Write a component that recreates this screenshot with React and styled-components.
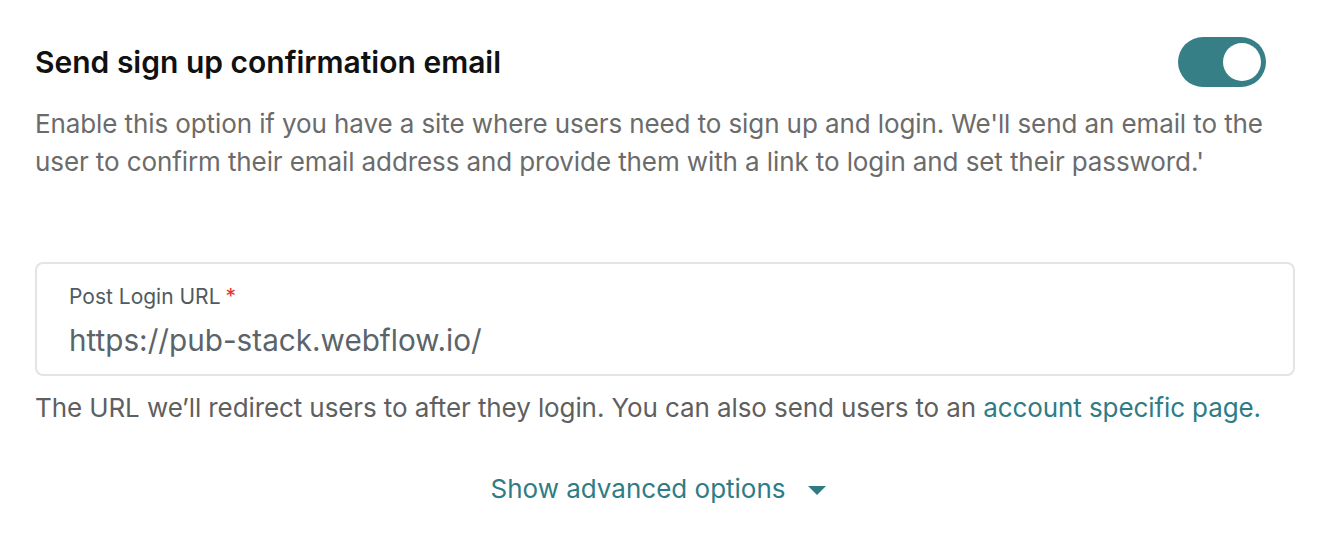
import React, { useState } from "react";
import styled, { createGlobalStyle } from "styled-components";

const GlobalStyle = createGlobalStyle`
    html, body {
        margin: 0;
        padding: 0;
        background: #ffffff;
    }
    body {
        font-family: "Inter", "Liberation Sans", sans-serif;
        -webkit-font-smoothing: antialiased;
    }
`;

const Container = styled.div`
    width: 1326px;
    box-sizing: border-box;
    padding: 37px 30px 0 35px;
    display: flex;
    flex-direction: column;
`;

const Header = styled.div`
    display: flex;
    align-items: center;
    justify-content: space-between;
    padding-right: 30px;
`;

const Title = styled.h2`
    margin: 0;
    font-size: 30px;
    font-weight: 600;
    color: #111;
    letter-spacing: 0;
`;

const Track = styled.button`
    width: 88px;
    height: 50px;
    border: none;
    border-radius: 25px;
    padding: 0 5px;
    display: flex;
    align-items: center;
    justify-content: ${props => (props.on ? "flex-end" : "flex-start")};
    background: ${props => (props.on ? "#367f87" : "#c9cfd2")};
    cursor: pointer;
    transition: all 0.15s ease;
`;

const Knob = styled.span`
    width: 38px;
    height: 38px;
    border-radius: 50%;
    background: #fff;
`;

const Description = styled.p`
    margin: 18px 0 0;
    font-size: 26px;
    line-height: 38px;
    color: #6b6b6b;
    letter-spacing: -0.1px;
`;

const Field = styled.label`
    margin-top: 81px;
    width: 1260px;
    box-sizing: border-box;
    border: 2px solid #e4e4e4;
    border-radius: 8px;
    padding: 20px 32px 14px;
    display: flex;
    flex-direction: column;
    gap: 10px;
`;

const Label = styled.span`
    font-size: 21px;
    color: #4f5b60;
    line-height: 26px;
`;

const Required = styled.span`
    color: #e5322d;
    margin-left: 5px;
`;

const Input = styled.input`
    border: none;
    outline: none;
    padding: 0;
    font-family: inherit;
    font-size: 29.7px;
    line-height: 40px;
    height: 40px;
    color: #5b6469;
    background: transparent;
`;

const Help = styled.p`
    margin: 14px 0 0;
    font-size: 26px;
    line-height: 36px;
    color: #5f5f5f;
    letter-spacing: -0.1px;
`;

const Link = styled.a`
    color: #2f7c85;
    text-decoration: none;
`;

const Advanced = styled.button`
    align-self: center;
    margin: 47px 0 0 -15px;
    background: none;
    border: none;
    padding: 0;
    display: flex;
    align-items: center;
    gap: 22px;
    font-family: inherit;
    font-size: 26px;
    color: #2f7c85;
    cursor: pointer;
`;

const Caret = styled.span`
    width: 0;
    height: 0;
    border-left: 9px solid transparent;
    border-right: 9px solid transparent;
    border-top: 9px solid #2f7c85;
    margin-top: 4px;
`;

const App = () => {
    const [on, setOn] = useState(true);
    const [url, setUrl] = useState("https://pub-stack.webflow.io/");

    return (
        <>
            <GlobalStyle />
            <Container>
                <Header>
                    <Title>Send sign up confirmation email</Title>
                    <Track on={on ? 1 : 0} onClick={() => setOn(!on)}>
                        <Knob />
                    </Track>
                </Header>
                <Description>
                    Enable this option if you have a site where users need to sign up and login. We'll send an email to the
                    user to confirm their email address and provide them with a link to login and set their password.'
                </Description>

                <Field>
                    <Label>Post Login URL<Required>*</Required></Label>
                    <Input value={url} onChange={e => setUrl(e.target.value)} />
                </Field>
                <Help>
                    The URL we’ll redirect users to after they login. You can also send users to an <Link href="#">account specific page.</Link>
                </Help>

                <Advanced>
                    Show advanced options
                    <Caret />
                </Advanced>
            </Container>
        </>
    );
};

export default App;
